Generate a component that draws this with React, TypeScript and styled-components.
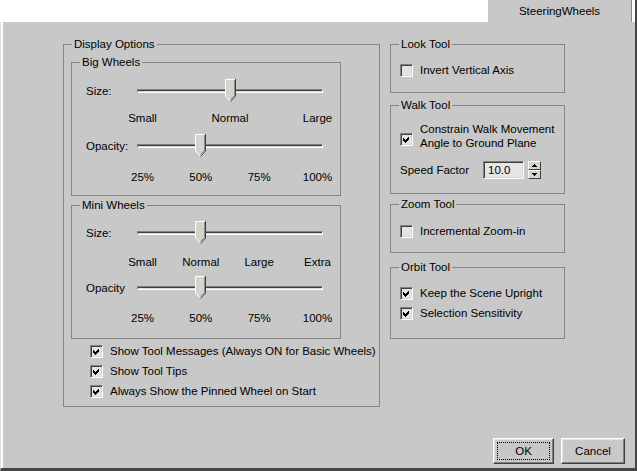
import React from "react"
import styled, { createGlobalStyle } from "styled-components"

const GlobalStyle = createGlobalStyle`
  html, body {
    margin: 0;
    padding: 0;
    background: #fff;
  }
  body {
    font-family: "Liberation Sans", Arial, sans-serif;
    font-size: 11.5px;
    line-height: 14px;
    color: #000;
  }
`

type SliderSpec = {
  label: string
  ticks: string[]
  index: number
  labelGap: number
  rowGap: number
}

const bigWheels: SliderSpec[] = [
  { label: "Size:", ticks: ["Small", "Normal", "Large"], index: 1, labelGap: 8, rowGap: 0 },
  { label: "Opacity:", ticks: ["25%", "50%", "75%", "100%"], index: 1, labelGap: 12, rowGap: 9 },
]

const miniWheels: SliderSpec[] = [
  { label: "Size:", ticks: ["Small", "Normal", "Large", "Extra"], index: 1, labelGap: 10, rowGap: 0 },
  { label: "Opacity", ticks: ["25%", "50%", "75%", "100%"], index: 1, labelGap: 11, rowGap: 7 },
]

const TRACK_W = 186
const THUMB_W = 11

const CheckMark = () => (
  <svg width="7" height="7" viewBox="0 0 7 7" shapeRendering="crispEdges">
    <polygon points="0,2 2,4 6,0 6,3 2,7 0,5" fill="#000" />
  </svg>
)

const Thumb = () => (
  <svg width="11" height="23" viewBox="0 0 11 23">
    <polygon points="0,0 11,0 11,17 5.5,22.5 0,17" fill="#d6d3cc" />
    <path d="M0.5 17 V0.5 H10" stroke="#fff" fill="none" />
    <path d="M0.5 17 L5.5 22" stroke="#fff" fill="none" />
    <path d="M10.5 0 V17 L5.5 22.5" stroke="#404040" fill="none" />
    <path d="M9.5 1 V16.5 L5.5 20.5" stroke="#8a8a8a" fill="none" />
  </svg>
)

const Arrow = ({ up }: { up?: boolean }) => (
  <svg width="5" height="3" viewBox="0 0 5 3" shapeRendering="crispEdges">
    <polygon points={up ? "2.5,0 5,3 0,3" : "0,0 5,0 2.5,3"} fill="#000" />
  </svg>
)

const Check = ({ checked, children, shift }: { checked?: boolean; children: React.ReactNode; shift?: number }) => (
  <CheckRow>
    <Box $shift={shift ?? 0}>{checked && <CheckMark />}</Box>
    <span>{children}</span>
  </CheckRow>
)

const Slider = ({ spec }: { spec: SliderSpec }) => {
  const frac = spec.index / (spec.ticks.length - 1)
  return (
    <>
      <SliderRow $mt={spec.rowGap}>
        <SliderLabel>{spec.label}</SliderLabel>
        <TrackArea>
          <Track />
          <ThumbHolder style={{ left: Math.round(frac * (TRACK_W - THUMB_W)) }}>
            <Thumb />
          </ThumbHolder>
        </TrackArea>
      </SliderRow>
      <TickRow $mt={spec.labelGap}>
        {spec.ticks.map((t) => (
          <Tick key={t}>{t}</Tick>
        ))}
      </TickRow>
    </>
  )
}

export default function App() {
  return (
    <Window>
      <GlobalStyle />
      <TabStrip>
        <Tab>SteeringWheels</Tab>
      </TabStrip>
      <Panel>
        <Columns>
          <Group $w={317}>
            <Legend>Display Options</Legend>
            <GroupBody $pad="4px 38px 8px 7px">
              <Group $w={270}>
                <Legend>Big Wheels</Legend>
                <GroupBody $pad="10px 17px 11px 14px">
                  {bigWheels.map((s) => (
                    <Slider key={s.label} spec={s} />
                  ))}
                </GroupBody>
              </Group>
              <Group $w={270} $mt={2}>
                <Legend>Mini Wheels</Legend>
                <GroupBody $pad="9px 17px 13px 14px">
                  {miniWheels.map((s) => (
                    <Slider key={s.label} spec={s} />
                  ))}
                </GroupBody>
              </Group>
              <CheckList>
                <Check checked>Show Tool Messages (Always ON for Basic Wheels)</Check>
                <Check checked>Show Tool Tips</Check>
                <Check checked>Always Show the Pinned Wheel on Start</Check>
              </CheckList>
            </GroupBody>
          </Group>

          <RightColumn>
            <Group $w={175}>
              <Legend>Look Tool</Legend>
              <GroupBody $pad="12px 4px 15px 9px">
                <Check>Invert Vertical Axis</Check>
              </GroupBody>
            </Group>
            <Group $w={175} $mt={5}>
              <Legend>Walk Tool</Legend>
              <GroupBody $pad="10px 4px 14px 9px">
                <Check checked shift={6}>
                  Constrain Walk Movement
                  <br />
                  Angle to Ground Plane
                </Check>
                <SpeedRow>
                  <SpeedLabel>Speed Factor</SpeedLabel>
                  <NumberField>10.0</NumberField>
                  <Spinner>
                    <SpinButton>
                      <Arrow up />
                    </SpinButton>
                    <SpinButton>
                      <Arrow />
                    </SpinButton>
                  </Spinner>
                </SpeedRow>
              </GroupBody>
            </Group>
            <Group $w={175} $mt={3}>
              <Legend>Zoom Tool</Legend>
              <GroupBody $pad="13px 4px 14px 9px">
                <Check>Incremental Zoom-in</Check>
              </GroupBody>
            </Group>
            <Group $w={175} $mt={7}>
              <Legend>Orbit Tool</Legend>
              <GroupBody $pad="12px 4px 18px 9px">
                <Stack>
                  <Check checked>Keep the Scene Upright</Check>
                  <Check checked>Selection Sensitivity</Check>
                </Stack>
              </GroupBody>
            </Group>
          </RightColumn>
        </Columns>

        <Footer>
          <Button $w={61} $focused>
            OK
          </Button>
          <Button $w={64}>Cancel</Button>
        </Footer>
      </Panel>
    </Window>
  )
}

const Window = styled.div`
  width: 637px;
  height: 471px;
  box-sizing: border-box;
  display: flex;
  flex-direction: column;
  border-right: 2px solid #454545;
`

const TabStrip = styled.div`
  height: 22px;
  flex: none;
  display: flex;
  justify-content: flex-end;
  padding-right: 3px;
  background: #fff;
`

const Tab = styled.div`
  width: 145px;
  box-sizing: border-box;
  background: #c8c8c8;
  border-left: 1px solid #fff;
  border-right: 1px solid #8a8a8a;
  text-align: center;
  line-height: 22px;
`

const Panel = styled.div`
  flex: 1;
  display: flex;
  flex-direction: column;
  background: #c8c8c8;
  border-left: 1px solid #dedede;
  border-bottom: 3px solid #454545;
  box-shadow: inset 2px 0 #fff;
  padding: 15px 0 0 62px;
`

const Columns = styled.div`
  display: flex;
  align-items: flex-start;
  gap: 10px;
`

const RightColumn = styled.div`
  display: flex;
  flex-direction: column;
`

const Group = styled.fieldset<{ $w: number; $mt?: number }>`
  width: ${(p) => p.$w}px;
  box-sizing: border-box;
  margin: ${(p) => p.$mt ?? 0}px 0 0;
  padding: 0;
  min-width: 0;
  border: 1px solid #858585;
`

const Legend = styled.legend`
  margin-left: 8px;
  padding: 0 2px;
  line-height: 14px;
`

const GroupBody = styled.div<{ $pad: string }>`
  padding: ${(p) => p.$pad};
`

const SliderRow = styled.div<{ $mt: number }>`
  display: flex;
  align-items: center;
  height: 24px;
  margin-top: ${(p) => p.$mt}px;
`

const SliderLabel = styled.span`
  width: 51px;
  flex: none;
`

const TrackArea = styled.div`
  position: relative;
  width: ${TRACK_W}px;
  height: 24px;
  display: flex;
  align-items: center;
`

const Track = styled.div`
  width: 100%;
  height: 2px;
  border: 1px solid;
  border-color: #808080 #fff #fff #808080;
  background: linear-gradient(#404040 50%, #d8d8d8 50%);
`

const ThumbHolder = styled.div`
  position: absolute;
  top: 0;
  line-height: 0;
`

const TickRow = styled.div<{ $mt: number }>`
  display: flex;
  justify-content: space-between;
  margin: ${(p) => p.$mt}px 0 0 ${51 + THUMB_W / 2}px;
  width: ${TRACK_W - THUMB_W}px;
  height: 14px;
`

const Tick = styled.span`
  width: 0;
  display: flex;
  justify-content: center;
  white-space: nowrap;
`

const CheckList = styled.div`
  display: flex;
  flex-direction: column;
  gap: 6px;
  margin: 5px 0 0 19px;
`

const Stack = styled.div`
  display: flex;
  flex-direction: column;
  gap: 6px;
`

const CheckRow = styled.label`
  display: flex;
  align-items: center;
  gap: 7px;
  line-height: 14px;
  white-space: nowrap;
`

const Box = styled.span<{ $shift: number }>`
  flex: none;
  width: 13px;
  height: 13px;
  box-sizing: border-box;
  margin-top: ${(p) => p.$shift}px;
  border: 1px solid;
  border-color: #808080 #fff #fff #808080;
  box-shadow: inset 1px 1px #404040, inset -1px -1px #d8d8d8;
  background: #e4e4e4;
  display: flex;
  align-items: center;
  justify-content: center;
`

const SpeedRow = styled.div`
  display: flex;
  align-items: center;
  height: 18px;
  margin-top: 11px;
`

const SpeedLabel = styled.span`
  width: 83px;
`

const NumberField = styled.div`
  width: 41px;
  height: 18px;
  box-sizing: border-box;
  border: 1px solid;
  border-color: #808080 #fff #fff #808080;
  box-shadow: inset 1px 1px #404040, inset -1px -1px #d8d8d8;
  background: #e6e6e6;
  padding: 1px 0 0 4px;
  line-height: 14px;
`

const Spinner = styled.div`
  width: 13px;
  height: 18px;
  margin-left: 4px;
  display: flex;
  flex-direction: column;
`

const SpinButton = styled.div`
  flex: 1;
  box-sizing: border-box;
  display: flex;
  align-items: center;
  justify-content: center;
  background: #d6d3cc;
  border: 1px solid;
  border-color: #fff #404040 #404040 #fff;
`

const Footer = styled.div`
  margin-top: auto;
  display: flex;
  justify-content: flex-end;
  gap: 7px;
  padding: 0 10px 4px 0;
`

const Button = styled.button<{ $w: number; $focused?: boolean }>`
  width: ${(p) => p.$w}px;
  height: 26px;
  padding: 0;
  font: inherit;
  color: #000;
  background: #c8c8c8;
  border: 1px solid;
  border-color: #fff #404040 #404040 #fff;
  box-shadow: inset -1px -1px #808080, inset 1px 1px #e4e4e4;
  outline: ${(p) => (p.$focused ? "1px dotted #000" : "none")};
  outline-offset: -5px;
`
